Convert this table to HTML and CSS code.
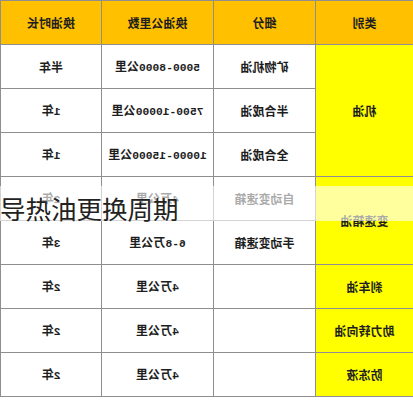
FILE: index.html
```html
<!DOCTYPE html>
<html lang="zh">
<head>
<meta charset="utf-8">
<link rel="stylesheet" href="styles.css">
</head>
<body>
<div class="wrap">
  <table class="grid">
    <colgroup>
      <col class="c-cat"><col class="c-sub"><col class="c-km"><col class="c-time">
    </colgroup>
    <thead>
      <tr><th>类别</th><th>细分</th><th>换油公里数</th><th>换油时长</th></tr>
    </thead>
    <tbody>
      <tr><td class="cat" rowspan="3">机油</td><td>矿物机油</td><td><span class="num">5000-8000</span>公里</td><td>半年</td></tr>
      <tr><td>半合成油</td><td><span class="num">7500-10000</span>公里</td><td><span class="num">1</span>年</td></tr>
      <tr><td>全合成油</td><td><span class="num">10000-15000</span>公里</td><td><span class="num">1</span>年</td></tr>
      <tr><td class="cat" rowspan="2">变速箱油</td><td>自动变速箱</td><td><span class="num">4</span>万公里</td><td><span class="num">2</span>年</td></tr>
      <tr><td>手动变速箱</td><td><span class="num">6-8</span>万公里</td><td><span class="num">3</span>年</td></tr>
      <tr><td class="cat">刹车油</td><td></td><td><span class="num">4</span>万公里</td><td><span class="num">2</span>年</td></tr>
      <tr><td class="cat">助力转向油</td><td></td><td><span class="num">4</span>万公里</td><td><span class="num">2</span>年</td></tr>
      <tr><td class="cat">防冻液</td><td></td><td><span class="num">4</span>万公里</td><td><span class="num">2</span>年</td></tr>
    </tbody>
  </table>
  <div class="band"><span class="title">导热油更换周期</span></div>
</div>
</body>
</html>
```

FILE: styles.css
```css
html, body {
  margin: 0;
  padding: 0;
  background: #ffffff;
}
.wrap {
  position: relative;
  width: 413px;
  height: 400px;
  overflow: hidden;
}
.grid {
  width: 413px;
  table-layout: fixed;
  border-collapse: collapse;
  transform: scaleX(-1);
  font-family: "Noto Sans CJK SC", "Liberation Serif", sans-serif;
  font-size: 12px;
  font-weight: 700;
  color: #1e1e1e;
  background: #ffffff;
}
.c-cat { width: 98px; }
.c-sub { width: 102px; }
.c-km { width: 112px; }
.c-time { width: 101px; }
.grid tr { height: 44px; }
.grid th, .grid td {
  border: 1px solid #8e8e8e;
  padding: 0;
  text-align: center;
  vertical-align: middle;
  line-height: 16px;
}
.grid th {
  background: #ffc000;
  font-weight: 700;
}
.grid td.cat {
  background: #ffff00;
  border-left-color: #5a5a5a;
}
.num {
  font-family: "Liberation Mono", monospace;
  font-size: 11.3px;
  font-weight: 700;
}
.band {
  position: absolute;
  left: 0;
  top: 186px;
  width: 413px;
  height: 35px;
  background: rgba(255, 255, 255, 0.62);
}
.title {
  display: block;
  padding-top: 8px;
  line-height: 27px;
  font-family: "Noto Sans CJK SC", sans-serif;
  font-size: 25.5px;
  font-weight: 400;
  color: #222222;
  white-space: nowrap;
}
```
